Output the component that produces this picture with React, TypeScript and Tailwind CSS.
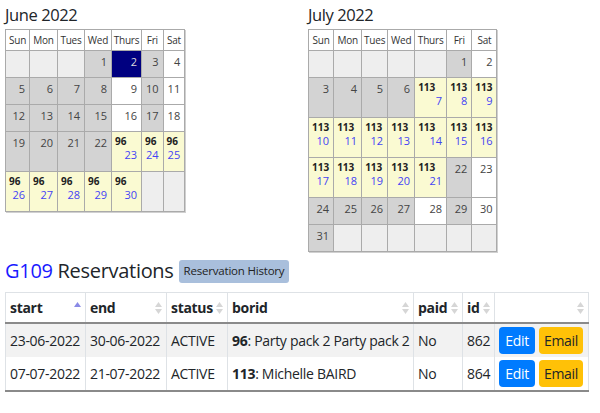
import React from "react";

type Cell = { k: "e" | "g" | "w" | "n" | "y"; d?: number; b?: string };

const heads = ["Sun", "Mon", "Tues", "Wed", "Thurs", "Fri", "Sat"];

const g = (d: number): Cell => ({ k: "g", d });
const w = (d: number): Cell => ({ k: "w", d });
const y = (d: number, b: string): Cell => ({ k: "y", d, b });
const e: Cell = { k: "e" };

const june: Cell[][] = [
	[e, e, e, g(1), { k: "n", d: 2 }, g(3), w(4)],
	[g(5), g(6), g(7), g(8), w(9), g(10), w(11)],
	[g(12), g(13), g(14), g(15), w(16), g(17), w(18)],
	[g(19), g(20), g(21), g(22), y(23, "96"), y(24, "96"), y(25, "96")],
	[y(26, "96"), y(27, "96"), y(28, "96"), y(29, "96"), y(30, "96"), e, e],
];

const july: Cell[][] = [
	[e, e, e, e, e, g(1), w(2)],
	[g(3), g(4), g(5), g(6), y(7, "113"), y(8, "113"), y(9, "113")],
	[y(10, "113"), y(11, "113"), y(12, "113"), y(13, "113"), y(14, "113"), y(15, "113"), y(16, "113")],
	[y(17, "113"), y(18, "113"), y(19, "113"), y(20, "113"), y(21, "113"), g(22), w(23)],
	[g(24), g(25), g(26), g(27), w(28), g(29), w(30)],
	[g(31), e, e, e, e, e, e],
];

const bg = {
	e: "bg-[#eeeeee]",
	g: "bg-[#d3d3d3]",
	w: "bg-white",
	n: "bg-[#000080]",
	y: "bg-[#fafad2]",
};

const Calendar = ({
	title,
	rows,
	cols,
}: {
	title: string;
	rows: Cell[][];
	cols: number[];
}) => (
	<div>
		<h2 className="text-[16.5px] leading-[22px] tracking-[-0.4px] text-[#212529] mt-[4px] mb-[3px]">{title}</h2>
		<table className="border-collapse text-[11px] shadow-[1px_1px_0_#d0d0d0]">
			<colgroup>
				{cols.map((c, i) => (
					<col key={i} style={{ width: c }} />
				))}
			</colgroup>
			<thead>
				<tr className="h-[21px]">
					{heads.map((h) => (
						<th key={h} className="border border-[#aaaaaa] font-normal text-[#333] text-[10px] tracking-[-0.2px] text-center px-0">
							{h}
						</th>
					))}
				</tr>
			</thead>
			<tbody>
				{rows.map((r, i) => (
					<tr key={i} className={r.some((c) => c.k === "y") ? "h-[40px]" : "h-[27px]"}>
						{r.map((c, j) => (
							<td
								key={j}
								className={`border border-[#aaaaaa] align-top px-[4px] leading-[12px] ${c.k === "y" ? "pt-[4px]" : "pt-[5px]"} ${bg[c.k]}`}
							>
								{c.k === "y" ? (
									<>
										<div className="text-left font-bold text-[10px] leading-[11px] mb-[2px] text-[#222] -ml-[1px]">{c.b}</div>
										<div className="text-right text-[#4343f5]">{c.d}</div>
									</>
								) : (
									<div className={`text-right ${c.k === "n" ? "text-[#ddd]" : "text-[#444]"}`}>{c.d}</div>
								)}
							</td>
						))}
					</tr>
				))}
			</tbody>
		</table>
	</div>
);

const Sort = ({ up }: { up?: boolean }) => (
	<svg width="7" height="12" viewBox="0 0 7 12" className="absolute right-[4px] top-[9px]">
		<path d="M3.5 0 L7 5 L0 5 Z" fill={up ? "#8a8ae6" : "#d6d6d6"} />
		{!up && <path d="M3.5 12 L7 7 L0 7 Z" fill="#d6d6d6" />}
	</svg>
);

const cols = [
	{ n: "start", w: 80, up: true },
	{ n: "end", w: 81 },
	{ n: "status", w: 61 },
	{ n: "borid", w: 186 },
	{ n: "paid", w: 49 },
	{ n: "id", w: 32 },
	{ n: "", w: 94 },
];

const rows = [
	{ s: "23-06-2022", e: "30-06-2022", b: "96", t: "Party pack 2 Party pack 2", id: "862" },
	{ s: "07-07-2022", e: "21-07-2022", b: "113", t: "Michelle BAIRD", id: "864" },
];

export default function App() {
	return (
		<div className="w-[600px] h-[413px] bg-white overflow-hidden font-['Open_Sans',sans-serif] text-[#212529]">
			<div className="flex pl-[5px]">
				<div className="w-[303px]">
					<Calendar title="June 2022" rows={june} cols={[24, 28, 27, 27, 30, 20, 21]} />
				</div>
				<div>
					<Calendar title="July 2022" rows={july} cols={[24, 28, 26, 27, 32, 23, 25]} />
				</div>
			</div>

			<div className="flex items-center gap-[5px] pl-[5px] mt-[6px]">
				<h1 className="text-[20px] leading-[26px] tracking-[-0.3px]">
					<span className="text-[#1a1aff]">G109</span> Reservations
				</h1>
				<button className="bg-[#a9bfdc] rounded-[3px] text-[11.5px] tracking-[-0.2px] text-[#222] px-[5px] h-[23px]">
					Reservation History
				</button>
			</div>

			<table className="ml-[5px] mt-[8px] border-collapse text-[14px] tracking-[-0.3px] table-fixed w-[583px]">
				<colgroup>
					{cols.map((c, i) => (
						<col key={i} style={{ width: c.w }} />
					))}
				</colgroup>
				<thead>
					<tr className="h-[30px]">
						{cols.map((c, i) => (
							<th
								key={i}
								className="relative border border-[#dee2e6] border-b-2 border-b-[#8a8a8a] text-left font-bold px-[4px]"
							>
								{c.n}
								<Sort up={c.up} />
							</th>
						))}
					</tr>
				</thead>
				<tbody>
					{rows.map((r, i) => (
						<tr
							key={i}
							className={`h-[34px] ${i === 0 ? "bg-[#f2f2f2]" : "bg-white border-b-2 border-b-[#8a8a8a]"}`}
						>
							<td className="border-x border-[#dee2e6] px-[4px] whitespace-nowrap">{r.s}</td>
							<td className="border-x border-[#dee2e6] px-[4px] whitespace-nowrap">{r.e}</td>
							<td className="border-x border-[#dee2e6] px-[4px]">ACTIVE</td>
							<td className="border-x border-[#dee2e6] px-[4px] whitespace-nowrap">
								<b>{r.b}</b>: {r.t}
							</td>
							<td className="border-x border-[#dee2e6] px-[4px]">No</td>
							<td className="border-x border-[#dee2e6] px-[4px]">{r.id}</td>
							<td className="border-x border-[#dee2e6] px-[4px]">
								<div className="flex gap-[4px]">
									<button className="bg-[#007bff] text-white rounded-[4px] w-[36px] h-[27px] text-[14px]">Edit</button>
									<button className="bg-[#ffc107] text-[#212529] rounded-[4px] w-[44px] h-[27px] text-[14px]">Email</button>
								</div>
							</td>
						</tr>
					))}
				</tbody>
			</table>
		</div>
	);
}
